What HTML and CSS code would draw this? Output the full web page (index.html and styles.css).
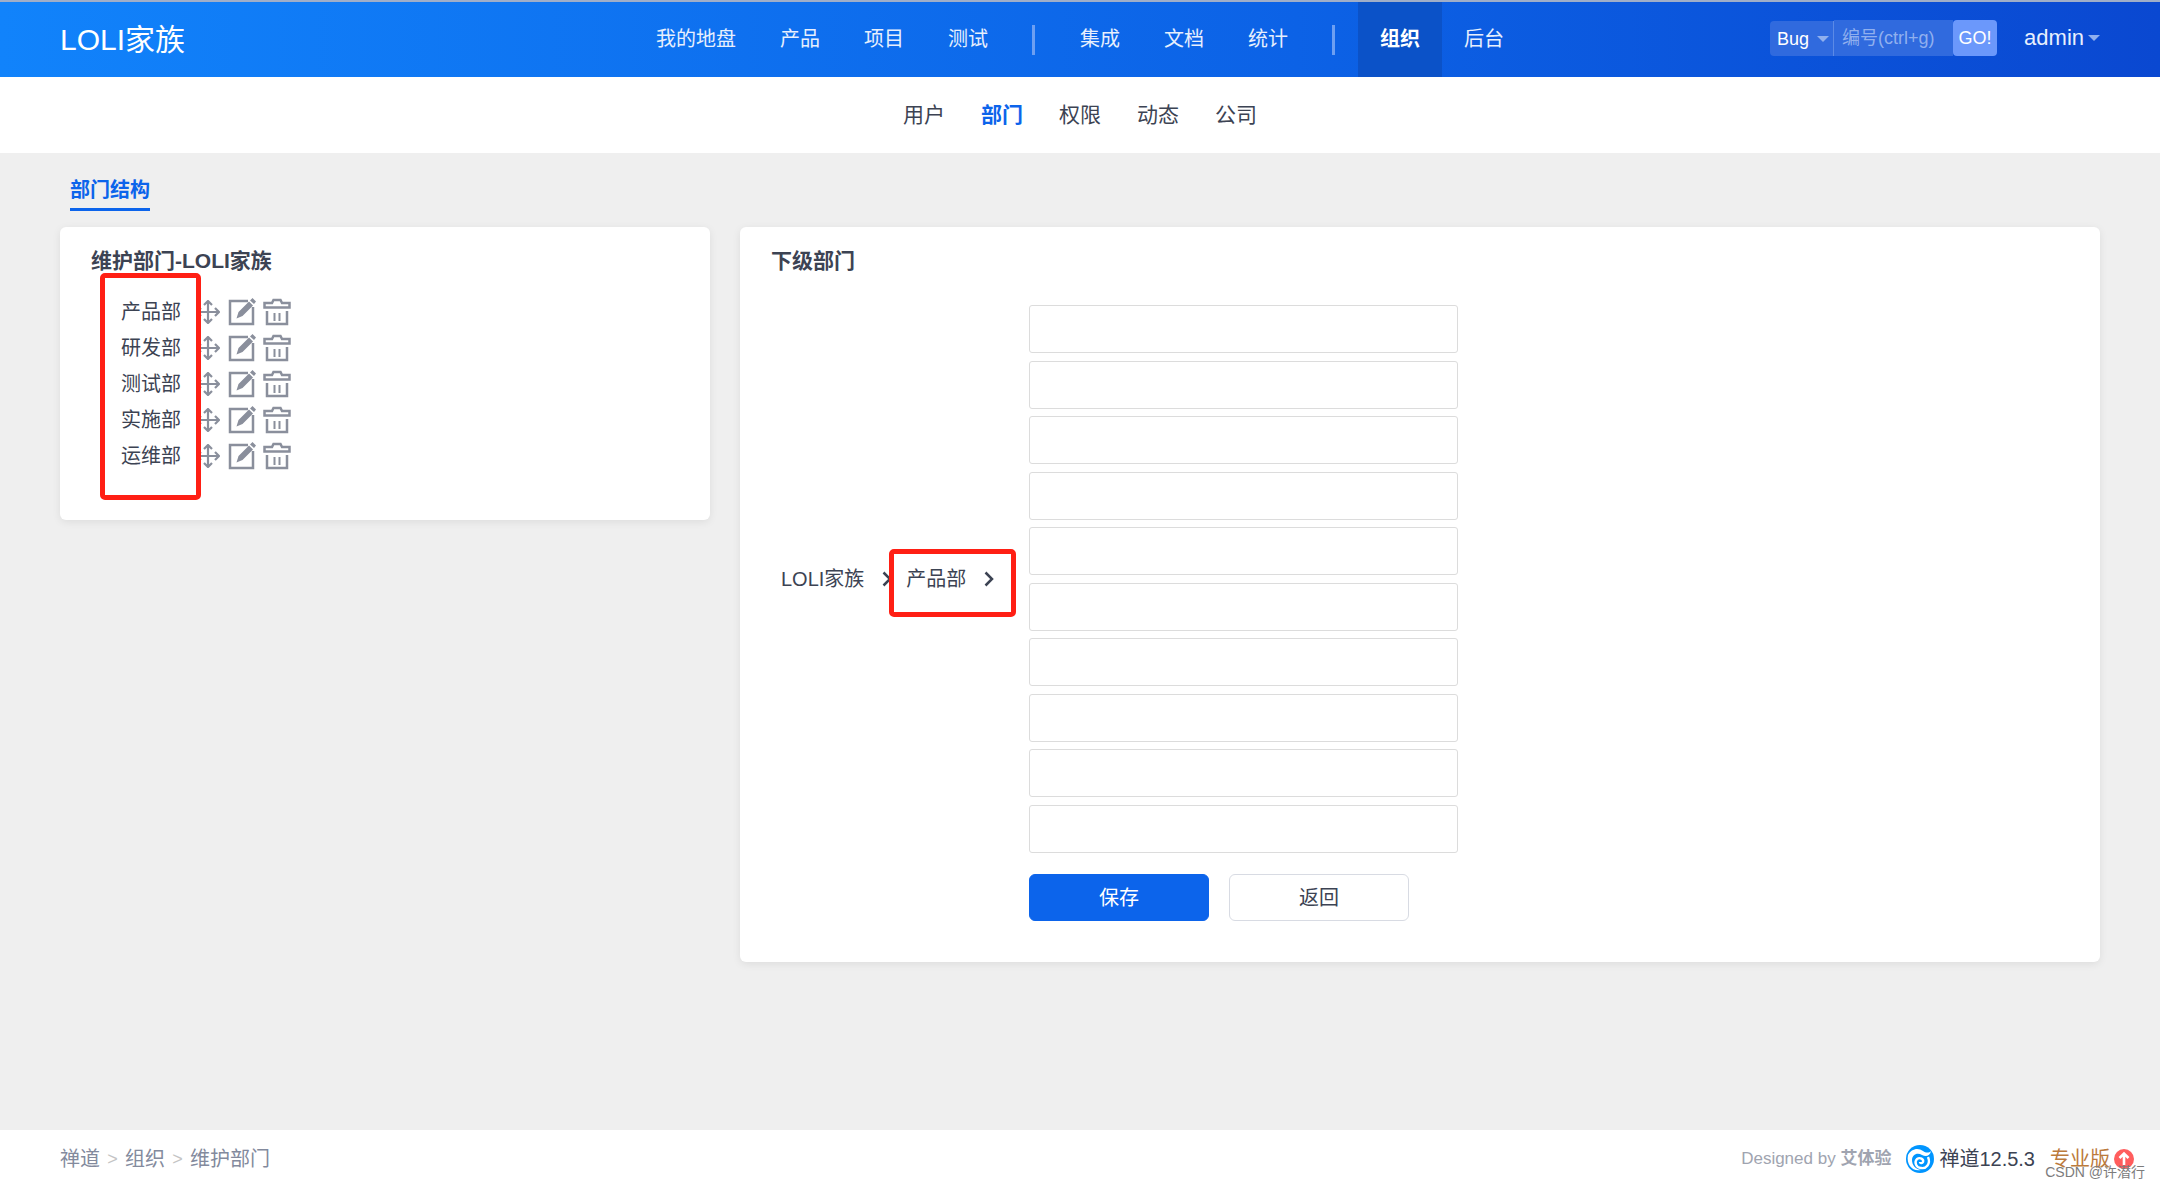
FILE: index.html
```html
<!DOCTYPE html>
<html lang="zh-CN">
<head>
<meta charset="utf-8">
<title>维护部门</title>
<link rel="stylesheet" href="styles.css">
</head>
<body>
<svg class="sprite" aria-hidden="true">
  <symbol id="move" viewBox="0 0 24 24"><path d="M12 1v22M1 12h22M8 5l4-4 4 4M8 19l4 4 4-4M5 8l-4 4 4 4M19 8l4 4-4 4" fill="none" stroke="currentColor" stroke-width="2.200"/></symbol>
  <symbol id="edit" viewBox="0 0 28 28"><path d="M20 3H2v23h23V9" fill="none" stroke="currentColor" stroke-width="2.500"/><path d="M8.500 20.500l2-6.500L21 3.500l4 4L14.500 18zM22 2.500L24.500 0 28 3.500 26 6z" fill="currentColor"/></symbol>
  <symbol id="trash" viewBox="0 0 28 28"><path d="M1.500 9.500V5h7.500l1.500-3h7l1.500 3h7.500v4.500zM4 13v13h20V13" fill="none" stroke="currentColor" stroke-width="2.500"/><path d="M11.500 15v8M16.500 15v8" fill="none" stroke="currentColor" stroke-width="2"/></symbol>
  <symbol id="chevron" viewBox="0 0 10 16"><path d="M1.500 1.500L8 8l-6.500 6.500" fill="none" stroke="currentColor" stroke-width="2.500"/></symbol>
</svg>
<header class="header">
  <a class="brand" href="#">LOLI家族</a>
  <nav class="mainnav">
    <a href="#">我的地盘</a><a href="#">产品</a><a href="#">项目</a><a href="#">测试</a>
    <span class="divider"></span>
    <a href="#">集成</a><a href="#">文档</a><a href="#">统计</a>
    <span class="divider"></span>
    <a class="active" href="#">组织</a><a href="#">后台</a>
  </nav>
  <div class="tools">
    <form class="search">
      <button class="type" type="button">Bug<span class="caret"></span></button>
      <input class="query" type="text" placeholder="编号(ctrl+g)" aria-label="编号">
      <button class="go" type="button">GO!</button>
    </form>
    <a class="user" href="#">admin<span class="caret"></span></a>
  </div>
</header>
<nav class="subnav">
  <a href="#">用户</a><a class="active" href="#">部门</a><a href="#">权限</a><a href="#">动态</a><a href="#">公司</a>
</nav>
<main class="main">
  <div class="tabs"><a class="tab" href="#">部门结构</a></div>
  <div class="columns">
    <section class="card tree">
      <h2>维护部门-LOLI家族</h2>
      <ul class="depts">
        <li><a href="#">产品部</a><svg class="move"><use href="#move"/></svg><svg class="act"><use href="#edit"/></svg><svg class="act"><use href="#trash"/></svg></li>
        <li><a href="#">研发部</a><svg class="move"><use href="#move"/></svg><svg class="act"><use href="#edit"/></svg><svg class="act"><use href="#trash"/></svg></li>
        <li><a href="#">测试部</a><svg class="move"><use href="#move"/></svg><svg class="act"><use href="#edit"/></svg><svg class="act"><use href="#trash"/></svg></li>
        <li><a href="#">实施部</a><svg class="move"><use href="#move"/></svg><svg class="act"><use href="#edit"/></svg><svg class="act"><use href="#trash"/></svg></li>
        <li><a href="#">运维部</a><svg class="move"><use href="#move"/></svg><svg class="act"><use href="#edit"/></svg><svg class="act"><use href="#trash"/></svg></li>
      </ul>
      <div class="mark mark-tree"></div>
    </section>
    <section class="card children">
      <h2>下级部门</h2>
      <form class="form">
        <div class="path">
          <span>LOLI家族</span><svg class="chevron"><use href="#chevron"/></svg>
          <span class="current">产品部<svg class="chevron"><use href="#chevron"/></svg><span class="mark mark-path"></span></span>
        </div>
        <div class="fields">
          <input type="text" aria-label="下级部门 1">
          <input type="text" aria-label="下级部门 2">
          <input type="text" aria-label="下级部门 3">
          <input type="text" aria-label="下级部门 4">
          <input type="text" aria-label="下级部门 5">
          <input type="text" aria-label="下级部门 6">
          <input type="text" aria-label="下级部门 7">
          <input type="text" aria-label="下级部门 8">
          <input type="text" aria-label="下级部门 9">
          <input type="text" aria-label="下级部门 10">
        </div>
        <div class="buttons">
          <button class="btn primary" type="button">保存</button>
          <button class="btn" type="button">返回</button>
        </div>
      </form>
    </section>
  </div>
</main>
<footer class="footer">
  <nav class="crumbs"><a href="#">禅道</a><i>&gt;</i><a href="#">组织</a><i>&gt;</i><span>维护部门</span></nav>
  <div class="credits">
    <span class="designed">Designed by <b>艾体验</b></span>
    <a class="version" href="#"><svg class="logo" viewBox="0 0 28 28"><circle cx="14" cy="14" r="14" fill="#0095ff"/><path d="M2 10C5 4 12 2 17 6c3 2 6 2 8 0-1 5-5 6-9 4C11 7 6 10 6 15c0 5 3 9 9 10C7 27 0 20 2 10z" fill="#fff"/><path d="M22 12c3 7-2 12-7 11-5 0-7-6-4-9 3-2 7 0 6 3-1 2-3 1-3 0" fill="none" stroke="#fff" stroke-width="2.400"/></svg>禅道12.5.3</a>
    <a class="pro" href="#">专业版<svg class="up" viewBox="0 0 20 20"><circle cx="10" cy="10" r="10" fill="#ff5d5d"/><path d="M10 16V5M5.500 9L10 4.500 14.500 9" fill="none" stroke="#fff" stroke-width="2.600"/></svg></a>
  </div>
  <span class="watermark">CSDN @许潜行</span>
</footer>
</body>
</html>
```
FILE: styles.css
```css
* { box-sizing: border-box; }
body {
  margin: 0;
  min-height: 100vh;
  display: flex;
  flex-direction: column;
  background: #efefef;
  color: #3c4353;
  font: 20px/30px "Liberation Sans", "Noto Sans CJK SC", sans-serif;
}
a { color: inherit; text-decoration: none; }
button, input { font: inherit; color: inherit; margin: 0; }
.sprite { display: none; }

.header {
  display: grid;
  grid-template-columns: 1fr auto 1fr;
  align-items: center;
  height: 77px;
  padding: 0 60px;
  border-top: 2px solid #a0aec8;
  background: linear-gradient(90deg, #1183fb, #0c62e6 60%, #0a48d1) padding-box;
  color: #fff;
}
.brand { font-size: 30px; }
.mainnav { display: flex; align-items: center; height: 75px; }
.mainnav a { padding: 0 22px; line-height: 75px; color: #e7effd; }
.mainnav .active { background: #0b52c8; color: #fff; font-weight: bold; }
.divider { width: 3px; height: 30px; margin: 0 23px 0 22px; background: #6d9ff2; }
.tools { display: flex; justify-content: flex-end; align-items: center; gap: 27px; padding-bottom: 3px; }
.search { display: flex; align-items: flex-end; font-size: 18px; line-height: 24px; color: #fff; }
.search button, .search input { border: 0; border-radius: 4px; }
.search .type {
  display: flex;
  align-items: center;
  gap: 8px;
  width: 64px;
  height: 35px;
  padding: 0 7px;
  border-right: 1px solid #5b8ae6;
  border-radius: 4px 0 0 4px;
  background: #306ade;
}
.search .query { width: 119px; height: 36px; padding: 0 8px; border-radius: 0; background: #306ade; }
.query::placeholder { color: #90b0ee; opacity: 1; }
.search .go { width: 44px; height: 36px; padding: 0; background: #6b98fb; }
.caret { border: 6px solid transparent; border-top-color: #90b0ee; border-bottom: 0; }
.user { display: flex; align-items: center; gap: 4px; font-size: 22px; color: #e7effd; }

.subnav { display: flex; justify-content: center; height: 76px; background: #fff; font-size: 21px; line-height: 76px; }
.subnav a { padding: 0 18px; }
.subnav .active { color: #0c64eb; font-weight: bold; }

.main { flex: 1; padding: 22px 60px; }
.tabs { display: flex; padding-left: 10px; margin-bottom: 16px; }
.tab { padding-bottom: 3px; border-bottom: 3px solid #0c64eb; color: #0c64eb; font-weight: bold; }
.columns { display: flex; align-items: flex-start; gap: 30px; }
.card {
  position: relative;
  padding: 19px 31px;
  border-radius: 6px;
  background: #fff;
  box-shadow: 0 2px 8px rgba(0, 0, 0, .08);
}
.card h2 { margin: 0; font-size: 21px; line-height: 30px; }
.tree { flex: 0 1 650px; padding-bottom: 46px; }
.children { flex: 1; padding-bottom: 41px; }
.depts { list-style: none; margin: 18px 0 0 30px; padding: 0; }
.depts li { display: flex; align-items: center; height: 36px; }
.depts svg { color: #8a8f9c; }
.move { width: 24px; height: 24px; margin: 0 8px 0 15px; }
.act { width: 28px; height: 28px; margin-right: 7px; }
.mark { position: absolute; border: 5px solid #ff1f14; border-radius: 5px; pointer-events: none; }
.mark-tree { left: 40px; top: 46px; width: 101px; height: 227px; }
.mark-path { left: -17px; top: -15px; width: 127px; height: 68px; }

.form { display: grid; grid-template-columns: 247px 429px; gap: 21px 11px; margin-top: 29px; }
.path { display: flex; align-items: center; padding-left: 10px; }
.current { position: relative; display: flex; align-items: center; margin-left: 14px; }
.chevron { width: 10px; height: 16px; margin-left: 18px; }
.fields { display: flex; flex-direction: column; justify-content: space-between; height: 548px; }
.fields input { width: 100%; height: 48px; padding: 0 12px; border: 1px solid #dcdcdc; border-radius: 3px; background: #fff; }
.buttons { grid-column: 2; display: flex; gap: 20px; }
.btn { width: 180px; height: 47px; border: 1px solid #d8dbe3; border-radius: 6px; background: #fff; }
.primary { border-color: #0c64eb; background: #0c64eb; color: #fff; }

.footer { position: relative; display: flex; justify-content: space-between; align-items: center; height: 58px; padding: 0 26px 0 60px; background: #fff; }
.crumbs { display: flex; color: #838a9d; }
.crumbs i { width: 25px; font-style: normal; font-size: 18px; text-align: center; color: #c4c4c4; }
.credits { display: flex; align-items: center; }
.designed { margin-right: 15px; font-size: 17px; color: #a0a4b0; }
.version, .pro { display: flex; align-items: center; gap: 5px; }
.version { margin-right: 15px; }
.pro { gap: 4px; color: #bb7a3c; }
.logo { width: 28px; height: 28px; }
.up { width: 20px; height: 20px; }
.watermark { position: absolute; right: 15px; bottom: 4px; font-size: 14px; line-height: 24px; color: #7c7c7c; }
```
